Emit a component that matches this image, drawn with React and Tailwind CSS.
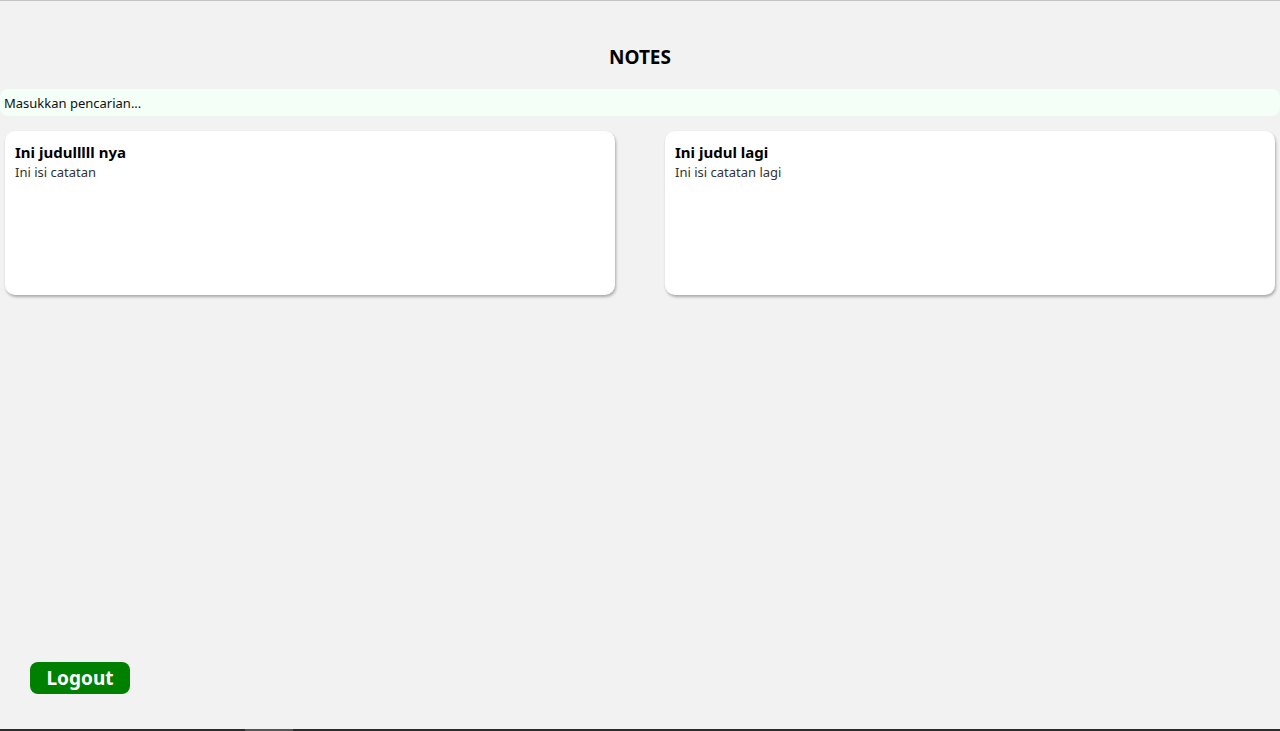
import React from 'react';

const notes = [
    { id: 1, title: "Ini judulllll nya", body: "Ini isi catatan" },
    { id: 2, title: "Ini judul lagi", body: "Ini isi catatan lagi" },
];

function NoteCard({ title, body }) {
    return (
        <div className="bg-white rounded-[10px] h-[164px] px-[10px] pt-[11px] shadow-[1px_2px_3px_rgba(0,0,0,0.3)]">
            <h3 className="text-[15px] font-bold text-black leading-[20px]">{title}</h3>
            <p className="text-[13px] text-[#333] leading-[21px]">{body}</p>
        </div>
    );
}

export default function App() {
    return (
        <div className="h-[731px] flex flex-col bg-[#f2f2f2] border-t border-[#c4c4c4] font-['Noto_Sans',sans-serif]">
            <h1 className="text-center text-[19px] font-bold text-black pt-[44px] leading-[24px]">NOTES</h1>

            <input
                type="text"
                placeholder="Masukkan pencarian..."
                className="mt-[20px] h-[27px] w-full bg-[#f4fff8] rounded-[8px] px-[4px] text-[13px] placeholder:text-[#111] outline-none"
            />

            <div className="grid grid-cols-2 gap-[50px] px-[5px] mt-[15px]">
                {notes.map(n => (
                    <NoteCard key={n.id} title={n.title} body={n.body} />
                ))}
            </div>

            <div className="mt-auto pl-[30px] pb-[35px]">
                <button className="w-[100px] h-[32px] bg-[#008000] text-white text-[19px] font-bold rounded-[8px] leading-none">
                    Logout
                </button>
            </div>

            <div className="h-[2px] bg-[#2b2b2b] flex">
                <div className="ml-[245px] w-[48px] bg-[#555]"></div>
            </div>
        </div>
    );
}
